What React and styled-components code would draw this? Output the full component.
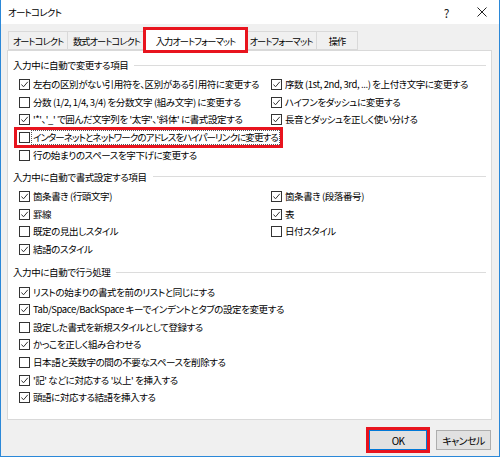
import React from "react";
import styled, { createGlobalStyle } from "styled-components";

const GlobalStyle = createGlobalStyle`
  body {
    margin: 0;
    background: #ffffff;
    font-family: "Noto Sans CJK JP", "Noto Sans", sans-serif;
  }
`;

const Window = styled.div`
  width: 500px;
  height: 457px;
  box-sizing: border-box;
  border: 1px solid #2b88d8;
  border-top: none;
  background: #f0f0f0;
  display: flex;
  flex-direction: column;
  color: #000;
  font-size: 9.5px;
  letter-spacing: -0.4px;
  font-feature-settings: "palt";
`;

const TitleBar = styled.div`
  height: 24px;
  flex: none;
  background: #ffffff;
  display: flex;
  align-items: center;
  padding-left: 7px;
`;

const Title = styled.div`
  flex: 1;
  letter-spacing: -0.8px;
`;

const TitleButton = styled.div`
  width: 35px;
  height: 24px;
  display: flex;
  align-items: center;
  justify-content: center;
  font-size: 12px;
  color: #222;
`;

const Body = styled.div`
  flex: 1;
  display: flex;
  flex-direction: column;
  padding: 7px 7px 0 6px;
`;

const Tabs = styled.div`
  display: flex;
  align-items: flex-end;
  height: 19px;
  padding-left: 2px;
`;

const Tab = styled.div`
  width: ${(p) => p.$w}px;
  height: ${(p) => (p.$active ? "22px" : "19px")};
  margin-bottom: ${(p) => (p.$active ? "-1px" : "0")};
  margin-left: -1px;
  box-sizing: border-box;
  border: 1px solid #d9d9d9;
  border-bottom: ${(p) => (p.$active ? "none" : "1px solid #d9d9d9")};
  background: ${(p) => (p.$active ? "#ffffff" : "#f0f0f0")};
  display: flex;
  align-items: center;
  justify-content: center;
  white-space: nowrap;
  font-size: 9.2px;
  letter-spacing: -0.9px;
  position: relative;
  z-index: ${(p) => (p.$active ? 1 : 0)};
  outline: ${(p) => (p.$mark ? "3px solid #e8141e" : "none")};
  outline-offset: -1px;
`;

const Panel = styled.div`
  height: 370px;
  box-sizing: border-box;
  background: #ffffff;
  border: 1px solid #d9d9d9;
  padding: 5px 5px 0 5px;
  display: flex;
  flex-direction: column;
`;

const Section = styled.div`
  margin-bottom: ${(p) => p.$gap || 0}px;
`;

const Heading = styled.div`
  height: 18px;
  display: flex;
  align-items: center;
  gap: 6px;
  &::after {
    content: "";
    flex: 1;
    border-top: 1px solid #dcdcdc;
  }
`;

const Columns = styled.div`
  display: flex;
  padding-left: 6px;
  margin-top: 2px;
`;

const Column = styled.div`
  width: ${(p) => (p.$wide ? "252px" : "auto")};
  display: flex;
  flex-direction: column;
`;

const Item = styled.div`
  height: ${(p) => (p.$mark ? "15px" : "17.6px")};
  margin: ${(p) => (p.$mark ? "1.3px 0 1.3px -2px" : "0")};
  padding-left: ${(p) => (p.$mark ? "2px" : "0")};
  align-self: flex-start;
  display: flex;
  align-items: center;
  gap: 3px;
  white-space: nowrap;
  outline: ${(p) => (p.$mark ? "3px solid #e8141e" : "none")};
`;

const Box = styled.span`
  width: 11px;
  height: 11px;
  box-sizing: border-box;
  border: 1px solid #333;
  background: #fff;
  display: flex;
  flex: none;
`;

const Label = styled.span`
  border: 1px ${(p) => (p.$focus ? "dotted #555" : "solid transparent")};
  padding: 0 1px;
  margin-left: -2px;
  line-height: 13px;
  letter-spacing: ${(p) => (p.$focus ? "-0.9px" : "inherit")};
`;

const Footer = styled.div`
  flex: 1;
  display: flex;
  justify-content: flex-end;
  align-items: flex-start;
  gap: 9px;
  padding: 10px 1px 0 0;
`;

const Button = styled.button`
  width: ${(p) => p.$w}px;
  height: 20px;
  box-sizing: border-box;
  background: #e1e1e1;
  border: 1px solid ${(p) => (p.$default ? "#0078d7" : "#adadad")};
  font-family: inherit;
  font-size: 10px;
  letter-spacing: -0.6px;
  font-feature-settings: "palt";
  color: #000;
  padding: 0;
  outline: ${(p) => (p.$mark ? "3px solid #e8141e" : "none")};
  outline-offset: 0;
`;

const Check = ({ on, mark, children }) => (
  <Item $mark={mark}>
    <Box>
      {on && (
        <svg width="9" height="9" viewBox="0 0 9 9">
          <polyline points="1.5,4.5 3.5,6.8 7.8,1.8" fill="none" stroke="#333" strokeWidth="1" />
        </svg>
      )}
    </Box>
    <Label $focus={mark}>{children}</Label>
  </Item>
);

const App = () => (
  <>
    <GlobalStyle />
    <Window>
      <TitleBar>
        <Title>オートコレクト</Title>
        <TitleButton>?</TitleButton>
        <TitleButton>
          <svg width="10" height="10" viewBox="0 0 10 10">
            <path d="M0.5 0.5L9.5 9.5M9.5 0.5L0.5 9.5" stroke="#222" strokeWidth="1" />
          </svg>
        </TitleButton>
      </TitleBar>
      <Body>
        <Tabs>
          <Tab $w={60}>オートコレクト</Tab>
          <Tab $w={79}>数式オートコレクト</Tab>
          <Tab $w={101} $active $mark>入力オートフォーマット</Tab>
          <Tab $w={72}>オートフォーマット</Tab>
          <Tab $w={42}>操作</Tab>
        </Tabs>
        <Panel>
          <Section $gap={4}>
            <Heading>入力中に自動で変更する項目</Heading>
            <Columns>
              <Column $wide>
                <Check on>左右の区別がない引用符を、区別がある引用符に変更する</Check>
                <Check>分数 (1/2, 1/4, 3/4) を分数文字 (組み文字) に変更する</Check>
                <Check on>'*'、'_' で囲んだ文字列を '太字'、'斜体' に書式設定する</Check>
                <Check mark>インターネットとネットワークのアドレスをハイパーリンクに変更する</Check>
                <Check>行の始まりのスペースを字下げに変更する</Check>
              </Column>
              <Column>
                <Check on>序数 (1st, 2nd, 3rd, ...) を上付き文字に変更する</Check>
                <Check on>ハイフンをダッシュに変更する</Check>
                <Check on>長音とダッシュを正しく使い分ける</Check>
              </Column>
            </Columns>
          </Section>
          <Section $gap={5}>
            <Heading>入力中に自動で書式設定する項目</Heading>
            <Columns>
              <Column $wide>
                <Check on>箇条書き (行頭文字)</Check>
                <Check on>罫線</Check>
                <Check>既定の見出しスタイル</Check>
                <Check on>結語のスタイル</Check>
              </Column>
              <Column>
                <Check on>箇条書き (段落番号)</Check>
                <Check on>表</Check>
                <Check>日付スタイル</Check>
              </Column>
            </Columns>
          </Section>
          <Section>
            <Heading>入力中に自動で行う処理</Heading>
            <Columns>
              <Column>
                <Check on>リストの始まりの書式を前のリストと同じにする</Check>
                <Check on>Tab/Space/BackSpace キーでインデントとタブの設定を変更する</Check>
                <Check>設定した書式を新規スタイルとして登録する</Check>
                <Check on>かっこを正しく組み合わせる</Check>
                <Check>日本語と英数字の間の不要なスペースを削除する</Check>
                <Check on>'記' などに対応する '以上' を挿入する</Check>
                <Check on>頭語に対応する結語を挿入する</Check>
              </Column>
            </Columns>
          </Section>
        </Panel>
        <Footer>
          <Button $w={58} $default $mark>OK</Button>
          <Button $w={55}>キャンセル</Button>
        </Footer>
      </Body>
    </Window>
  </>
);

export default App;
